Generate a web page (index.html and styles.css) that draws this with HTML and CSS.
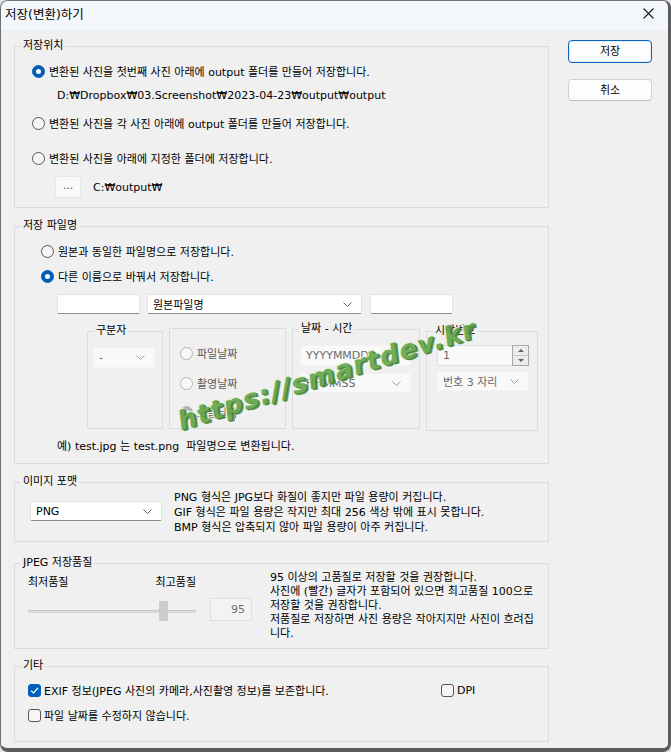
FILE: index.html
```html
<!DOCTYPE html>
<html lang="ko">
<head>
  <meta charset="UTF-8" />
  <title>저장(변환)하기</title>
  <link rel="stylesheet" href="styles.css">
</head>
<body>
  <div class="window">
    <div class="titlebar">
      <span class="title">저장(변환)하기</span>
      <svg class="close" width="11" height="11" viewBox="0 0 11 11"><path d="M0.5 0.5L10.5 10.5M10.5 0.5L0.5 10.5" stroke="#1b1b1b" stroke-width="1.1" fill="none"/></svg>
    </div>

    <div class="dialog">
      <div class="main">
        <!-- 저장위치 -->
        <fieldset class="group loc">
          <legend>저장위치</legend>
          <div class="loc-body">
            <div class="opt first"><span class="radio on"></span>변환된 사진을 첫번째 사진 아래에 output 폴더를 만들어 저장합니다.</div>
            <div class="path">D:₩Dropbox₩03.Screenshot₩2023-04-23₩output₩output</div>
            <div class="opt second"><span class="radio"></span>변환된 사진을 각 사진 아래에 output 폴더를 만들어 저장합니다.</div>
            <div class="opt third"><span class="radio"></span>변환된 사진을 아래에 지정한 폴더에 저장합니다.</div>
            <div class="browse">
              <div class="btn-dots">...</div>
              <span class="folder">C:₩output₩</span>
            </div>
          </div>
        </fieldset>

        <!-- 저장 파일명 -->
        <fieldset class="group names">
          <legend>저장 파일명</legend>
          <div class="names-body">
            <div class="opt first"><span class="radio"></span>원본과 동일한 파일명으로 저장합니다.</div>
            <div class="opt second"><span class="radio on"></span>다른 이름으로 바꿔서 저장합니다.</div>
            <div class="name-row">
              <div class="ctl name-pre"></div>
              <div class="ctl select name-main"><span>원본파일명</span><svg class="chev" width="9" height="5" viewBox="0 0 9 5"><path d="M0.5 0.5L4.5 4.5L8.5 0.5" stroke="#606060" fill="none"/></svg></div>
              <div class="ctl name-post"></div>
            </div>

            <div class="sub-row">
              <fieldset class="sub sep">
                <legend>구분자</legend>
                <div class="ctl select dim sep-select"><span>-</span><svg class="chev" width="9" height="5" viewBox="0 0 9 5"><path d="M0.5 0.5L4.5 4.5L8.5 0.5" stroke="#a0a0a0" fill="none"/></svg></div>
              </fieldset>
              <fieldset class="sub dates">
                <div class="opt d1"><span class="radio dim"></span>파일날짜</div>
                <div class="opt d2"><span class="radio dim"></span>촬영날짜</div>
                <div class="opt d3"><span class="radio dim on"></span>오늘날짜</div>
              </fieldset>
              <fieldset class="sub stamp">
                <legend>날짜 - 시간</legend>
                <div class="ctl dim stamp-date">YYYYMMDD</div>
                <div class="ctl select dim stamp-time"><span>HHMMSS</span><svg class="chev" width="9" height="5" viewBox="0 0 9 5"><path d="M0.5 0.5L4.5 4.5L8.5 0.5" stroke="#a0a0a0" fill="none"/></svg></div>
              </fieldset>
              <fieldset class="sub start">
                <legend>시작번호</legend>
                <div class="spin">
                  <div class="spin-val">1</div>
                  <div class="spin-btns"><span class="up"></span><span class="down"></span></div>
                </div>
                <div class="ctl select dim digits"><span>번호 3 자리</span><svg class="chev" width="9" height="5" viewBox="0 0 9 5"><path d="M0.5 0.5L4.5 4.5L8.5 0.5" stroke="#a0a0a0" fill="none"/></svg></div>
              </fieldset>
            </div>

            <div class="example">예) test.jpg 는 test.png&nbsp; 파일명으로 변환됩니다.</div>
          </div>
        </fieldset>

        <!-- 이미지 포맷 -->
        <fieldset class="group format">
          <legend>이미지 포맷</legend>
          <div class="format-body">
            <div class="ctl select format-select"><span>PNG</span><svg class="chev" width="9" height="5" viewBox="0 0 9 5"><path d="M0.5 0.5L4.5 4.5L8.5 0.5" stroke="#606060" fill="none"/></svg></div>
            <div class="note">
              PNG 형식은 JPG보다 화질이 좋지만 파일 용량이 커집니다.<br>
              GIF 형식은 파일 용량은 작지만 최대 256 색상 밖에 표시 못합니다.<br>
              BMP 형식은 압축되지 않아 파일 용량이 아주 커집니다.
            </div>
          </div>
        </fieldset>

        <!-- JPEG 저장품질 -->
        <fieldset class="group quality">
          <legend>JPEG 저장품질</legend>
          <div class="quality-body">
            <div class="slider-area">
              <div class="slider-labels"><span>최저품질</span><span>최고품질</span></div>
              <div class="slider"><span class="thumb"></span></div>
            </div>
            <div class="q-value">95</div>
            <div class="note q-note">
              95 이상의 고품질로 저장할 것을 권장합니다.<br>
              사진에 (빨간) 글자가 포함되어 있으면 최고품질 100으로<br>
              저장할 것을 권장합니다.<br>
              저품질로 저장하면 사진 용량은 작아지지만 사진이 흐려집<br>
              니다.
            </div>
          </div>
        </fieldset>

        <!-- 기타 -->
        <fieldset class="group etc">
          <legend>기타</legend>
          <div class="etc-body">
            <div class="etc-row first">
              <div class="exif"><span class="check on"><svg width="9" height="7" viewBox="0 0 9 7"><path d="M1 3.6L3.4 6L8 1" stroke="#fff" stroke-width="1.2" fill="none"/></svg></span>EXIF 정보(JPEG 사진의 카메라,사진촬영 정보)를 보존합니다.</div>
              <div class="dpi"><span class="check"></span>DPI</div>
            </div>
            <div class="etc-row second"><span class="check"></span>파일 날짜를 수정하지 않습니다.</div>
          </div>
        </fieldset>
      </div>

      <div class="actions">
        <div class="btn primary">저장</div>
        <div class="btn cancel">취소</div>
      </div>
    </div>

    <div class="watermark">https://smartdev.kr</div>
  </div>
</body>
</html>
```

FILE: styles.css
```css
body {
  margin: 0;
  background: #e4e4e4;
  font-family: "DejaVu Sans", "Noto Sans CJK KR", sans-serif;
  font-size: 11px;
  color: #000;
}

.window {
  position: relative;
  width: 667px;
  height: 747px;
  background: #f0f0f0;
  border: 1px solid #707070;
  border-right: 3px solid #5c5c5c;
  border-bottom: 4px solid #5c5c5c;
  border-radius: 8px;
  overflow: hidden;
}

.titlebar {
  height: 25px;
  padding: 0 14px 4px 4px;
  background: #f3f6fa;
  display: flex;
  align-items: center;
  justify-content: space-between;
}

.title {
  font-size: 12.5px;
}

.dialog {
  display: flex;
  padding: 9px 0 0 13px;
}

.main {
  width: 535px;
}

/* group boxes */
fieldset {
  margin: 0;
  padding: 0;
  min-width: 0;
  border: 1px solid #dcdcdc;
  box-sizing: border-box;
}

legend {
  margin-left: 6px;
  padding: 0 2px;
  line-height: 14px;
}

.opt {
  display: flex;
  align-items: center;
  height: 16px;
  white-space: nowrap;
}

.radio {
  width: 11px;
  height: 11px;
  border: 1px solid #555;
  border-radius: 50%;
  background: #f6f6f6;
  margin-right: 4px;
  position: relative;
  flex-shrink: 0;
}

.radio.on {
  background: #005fb8;
  border-color: #005fb8;
}

.radio.on::after {
  content: "";
  position: absolute;
  left: 3px;
  top: 3px;
  width: 5px;
  height: 5px;
  border-radius: 50%;
  background: #fff;
}

.radio.dim {
  border-color: #b4b4b4;
  background: #f8f8f8;
}

.radio.dim.on {
  background: #b4b4b4;
}

.check {
  width: 11px;
  height: 11px;
  border: 1px solid #555;
  border-radius: 3px;
  background: #f6f6f6;
  margin-right: 3px;
  display: flex;
  align-items: center;
  justify-content: center;
  flex-shrink: 0;
}

.check.on {
  background: #005fb8;
  border-color: #005fb8;
}

.ctl {
  box-sizing: border-box;
  height: 20px;
  background: #fff;
  border: 1px solid #e3e3e3;
  border-bottom-color: #8c8c8c;
  border-radius: 2px;
  display: flex;
  align-items: center;
  padding: 0 5px;
  white-space: nowrap;
}

.select {
  justify-content: space-between;
  padding-right: 9px;
}

.ctl.dim {
  background: #f9f9f9;
  border-color: #f3f3f3;
  color: #6a6a6a;
}

/* 저장위치 */
.loc {
  height: 169px;
}

.loc-body {
  padding-left: 17px;
}

.loc .first { margin-top: 10px; }
.loc .second { margin-top: 11px; }
.loc .third { margin-top: 19px; }

.path {
  margin: 9px 0 0 25px;
  line-height: 16px;
}

.browse {
  display: flex;
  align-items: center;
  margin: 10px 0 0 23px;
}

.btn-dots {
  width: 26px;
  height: 22px;
  box-sizing: border-box;
  border: 1px solid #e6e6e6;
  border-radius: 3px;
  background: #f9f9f9;
  color: #555;
  text-align: center;
  line-height: 18px;
}

.folder {
  margin-left: 12px;
}

/* 저장 파일명 */
.names {
  height: 245px;
  margin-top: 11px;
}

.names-body {
  padding-left: 26px;
}

.names .first { margin-top: 10px; }
.names .second { margin-top: 9px; }

.name-row {
  display: flex;
  margin: 10px 0 0 16px;
}

.name-pre, .name-post { width: 83px; }
.name-main { width: 215px; margin: 0 8px 0 7px; }

.sub-row {
  display: flex;
  align-items: flex-start;
  gap: 6px;
  margin: 8px 0 0 46px;
}

.sep { width: 76px; height: 105px; margin-top: 2px; }
.sep-select { width: 62px; height: 21px; margin: 9px 0 0 5px; }

.dates { width: 117px; height: 101px; margin-top: 6px; padding-left: 10px; }
.dates .opt { color: #5a5a5a; }
.dates .d1 { margin-top: 16px; }
.dates .d2 { margin-top: 14px; }
.dates .d3 { margin-top: 13px; }

.stamp { width: 128px; height: 107px; }
.stamp-date { width: 111px; height: 21px; margin: 9px 0 0 7px; color: #5a5a5a; }
.stamp-time { width: 111px; margin: 7px 0 0 7px; color: #5a5a5a; }

.start { width: 112px; height: 107px; margin-top: 2px; }

.spin {
  display: flex;
  width: 92px;
  height: 21px;
  margin: 7px 0 0 10px;
  box-sizing: border-box;
  border: 1px solid #e0e0e0;
  background: #f9f9f9;
}

.spin-val {
  flex: 1;
  padding-left: 5px;
  line-height: 19px;
  color: #6a6a6a;
}

.spin-btns {
  width: 15px;
  border: 1px solid #a8a8a8;
  margin: -1px -1px -1px 0;
  display: flex;
  flex-direction: column;
  background: #ececec;
}

.spin-btns span {
  flex: 1;
  display: flex;
  align-items: center;
  justify-content: center;
}

.spin-btns .up { border-bottom: 1px solid #c8c8c8; }

.spin-btns .up::after {
  content: "";
  border: 3px solid transparent;
  border-bottom: 3px solid #606060;
  border-top: 0;
}

.spin-btns .down::after {
  content: "";
  border: 3px solid transparent;
  border-top: 3px solid #606060;
  border-bottom: 0;
}

.digits { width: 92px; margin: 5px 0 0 10px; }

.example {
  margin: 8px 0 0 16px;
  line-height: 16px;
  white-space: nowrap;
}

/* 이미지 포맷 */
.format {
  height: 67px;
  margin-top: 11px;
}

.format-body {
  display: flex;
  padding-left: 15px;
}

.format-select {
  width: 132px;
  margin-top: 12px;
}

.note {
  line-height: 15px;
  white-space: nowrap;
  margin: 1px 0 0 12px;
}

/* JPEG 저장품질 */
.quality {
  height: 93px;
  margin-top: 14px;
}

.quality-body {
  display: flex;
  padding-left: 13px;
}

.slider-area {
  width: 168px;
}

.slider-labels {
  display: flex;
  justify-content: space-between;
  margin-top: 6px;
  line-height: 14px;
}

.slider {
  position: relative;
  height: 20px;
  margin-top: 11px;
}

.slider::before {
  content: "";
  position: absolute;
  left: 0;
  right: 0;
  top: 9px;
  height: 2px;
  background: #dadada;
  border-top: 1px solid #c6c6c6;
}

.thumb {
  position: absolute;
  left: 131px;
  top: 0;
  width: 9px;
  height: 20px;
  background: #cccccc;
}

.q-value {
  width: 42px;
  height: 23px;
  box-sizing: border-box;
  margin: 28px 0 0 14px;
  border: 1px solid #dedede;
  background: #f3f3f3;
  color: #6e6e6e;
  text-align: right;
  padding-right: 6px;
  line-height: 21px;
}

.q-note {
  line-height: 14px;
  margin: 1px 0 0 18px;
}

/* 기타 */
.etc {
  height: 83px;
  margin-top: 10px;
}

.etc-body {
  padding-left: 13px;
}

.etc-row {
  display: flex;
  align-items: center;
  height: 16px;
  white-space: nowrap;
}

.etc-row.first { margin-top: 9px; }
.etc-row.second { margin-top: 9px; }

.exif {
  width: 413px;
  display: flex;
  align-items: center;
}

.dpi {
  display: flex;
  align-items: center;
}

/* buttons */
.actions {
  width: 84px;
  margin-left: 19px;
  padding-top: 1px;
  display: flex;
  flex-direction: column;
}

.btn {
  box-sizing: border-box;
  height: 23px;
  border-radius: 4px;
  background: #fdfdfd;
  border: 1px solid #d2d2d2;
  border-bottom-color: #bcbcbc;
  text-align: center;
  line-height: 21px;
}

.btn.primary {
  border: 1px solid #0a64b8;
  box-shadow: inset 0 0 0 1px #e4eef8;
}

.btn.cancel {
  height: 22px;
  margin-top: 16px;
}

/* site watermark laid over the dialog */
.watermark {
  position: absolute;
  left: 170px;
  top: 359px;
  width: 310px;
  line-height: 30px;
  text-align: center;
  font-family: "DejaVu Sans", sans-serif;
  font-size: 26px;
  font-weight: bold;
  font-style: oblique;
  letter-spacing: 1.5px;
  color: #62a548;
  opacity: 0.9;
  transform: rotate(-17.5deg);
  text-shadow: 1px 1px 0 #3e7a2c, 2px 2px 0 #4f8a3a, -1px -1px 0 #e8f2e2, 1px -1px 0 #e8f2e2, -1px 1px 0 #e8f2e2;
  white-space: nowrap;
}
```
